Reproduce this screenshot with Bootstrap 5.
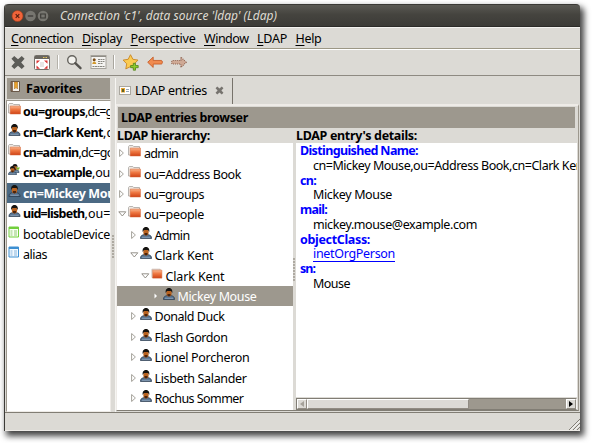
<!DOCTYPE html>
<html lang="en">
<head>
<meta charset="utf-8">
<meta name="viewport" content="width=device-width, initial-scale=1">
<title>Connection 'c1', data source 'ldap' (Ldap)</title>
<link href="https://cdn.jsdelivr.net/npm/bootstrap@5.3.0/dist/css/bootstrap.min.css" rel="stylesheet">
<style>
body{width:592px;height:443px;overflow:hidden;background:#fff;color:#000;font:12.5px/15px "Noto Sans","Open Sans",sans-serif;padding:4px 0 0 4px}
svg{display:block;flex:none}
[data-w]{white-space:nowrap;display:inline-block}
.app-window{width:576px;height:427px;background:#dcdad5;border-left:1px solid #3c3b37;border-radius:4px 4px 0 0;box-shadow:3px 4px 6px 1px rgba(0,0,0,.75)}
.titlebar{height:23px;background:linear-gradient(#5a5953,#45443f 45%,#3c3b37);border-top:1px solid #3a3935;border-bottom:1px solid #2c2b28;border-radius:4px 4px 0 0;color:#dfdbd2;font-style:italic;font-size:12px;padding-left:5px}
.menubar{height:22px;border-top:1px solid #f4f3f0;border-bottom:1px solid #9c9785;padding-left:6px;gap:8.5px}
.menubar span{text-underline-offset:2px}
.toolbar-strip{height:27px;border-top:1px solid #fff;border-bottom:1px solid #8e8a82;padding-bottom:2px}
.work-area{height:336px;padding-top:2px}
.side{width:106px;padding-left:1px}
.side-head{height:21px;margin-left:1px;width:103px;background:#9d988e;padding-left:3px}
.side-head svg{margin-top:-3px}
.side-list{height:312px;margin-top:1px;background:#fff;border:1px solid #9d988e;border-right-color:#eeebe7;border-bottom-color:#eeebe7;overflow:hidden}
.fav{height:20.42px;white-space:nowrap;overflow:hidden;padding-left:1px}
.fav .label{margin-left:2px;padding-top:1px}
.fav svg,.node svg.pic{margin-top:-4px}
.fav.chosen{background:#4b6983;color:#fff}
.sash{width:5px;border-right:1px solid #f6f5f2;position:relative}
.grip{width:3px;height:23px;position:absolute;background:radial-gradient(circle at 1px 1px,#9d988e .6px,transparent 1px) 0 0/3px 3px}
.notebook{width:463px}
.tab-row{height:26px}
.tab-page-title{width:117px;border-right:1px solid #77736b;padding:0 0 2px 3px}
.panel-body{border-top:2px solid #eeebe7;border-left:1px solid #eeebe7;border-right:1px solid #9d988e;border-bottom:1px solid #817d74;height:307px}
.browser-head{height:21px;margin:1px 3px 0 1px;background:#9d988e;padding-left:3px}
.caption-row{height:15px;padding-top:1px;line-height:14px}
.caption-row>:first-child{width:179px}
.tree{width:176px;height:267px;background:#fff;overflow:hidden}
.node{height:20.42px}
.node .label{margin-left:3px;padding-top:1px}
.node.chosen{background:#9d988e;color:#fff}
.arrow{width:10px}
.lvl0{padding-left:1px}.lvl1{padding-left:12.5px}.lvl2{padding-left:23.5px}.lvl3{padding-left:35.5px}
.details{width:281px;height:254px;background:#fff;overflow:hidden;margin-left:3px;line-height:14.78px;padding:1px 0 0 4px}
.details dl{margin:0}.details dt{color:#00f;height:14.78px}.details dd{margin:0 0 0 13px;height:14.78px}
.details a,.details a:hover{color:#00f;text-decoration:underline #00f 1px;text-underline-offset:3px}
.hscroll{width:281px;height:12px;margin:1px 0 0 3px;background:#9d988e;border:1px solid #817d74;border-right-color:#f6f5f2}
.hscroll>div{background:#dcdad5;border:1px solid #fff;border-right-color:#918c83;border-bottom-color:#918c83}
.hbutton{width:10px}.hthumb{width:162px}
.statusbar{height:19px;border-top:1px solid #817d74;border-bottom:1px solid #eeebe7}
</style>
</head>
<body>
<svg width="0" height="0" class="position-absolute">
<defs>
<linearGradient id="gf" x1="0" y1="0" x2="0" y2="1"><stop offset="0" stop-color="#f9b791"/><stop offset=".45" stop-color="#ee7741"/><stop offset="1" stop-color="#cf4316"/></linearGradient>
<symbol id="folder" viewBox="0 0 13 12"><path d="M.5 10V1.500l.8-1h3.500l.9 1h5.800v8.500z" fill="#eeeae5" stroke="#a9a5a0" stroke-width=".8"/><path d="M2.200 3h10.300v8H2.200z" fill="url(#gf)" stroke="#d46a3e" stroke-width=".5"/></symbol>
<symbol id="leaf" viewBox="0 0 13 12"><path d="M1 .8h9v9H1z" fill="#eeeae5" stroke="#b9a79c" stroke-width=".7"/><path d="M1.800 1.800h10v8.700h-10z" fill="url(#gf)" stroke="#d46a3e" stroke-width=".5"/></symbol>
<symbol id="person" viewBox="0 0 12 12"><path d="M.4 11.500C.4 8.800 2 8 4 7.600h4c2 .4 3.600 1.200 3.600 3.900z" fill="#597490" stroke="#26384c" stroke-width=".7"/><path d="M2 10.300h8" stroke="#91a6bc" stroke-width=".8"/><ellipse cx="6" cy="4.900" rx="2.700" ry="3.500" fill="#b8621f"/><path d="M2.700 5C2.200 1.500 4 .1 6 .1s3.800 1.400 3.300 4.900L8 3H4z" fill="#151310"/><path d="M4.500 6h3v1.700L6 8.600 4.500 7.700z" fill="#4b250e"/></symbol>
<symbol id="open" viewBox="0 0 10 8"><path d="M.8 1.800h7L4.300 6z" fill="#fff" stroke="#8b877f" stroke-width=".9"/></symbol>
<symbol id="shut" viewBox="0 0 10 8"><path d="M1.600.5v7L5.400 4z" fill="#fff" stroke="#9b978f" stroke-width=".9"/></symbol>
<symbol id="cross" viewBox="0 0 16 16"><path d="M1 4l3-3 4 3.600L12 1l3 3-3.600 4L15 12l-3 3-4-3.600L4 15l-3-3 3.600-4z"/></symbol>
<symbol id="arrowleft" viewBox="0 0 16 12"><path d="M.7 6L6.200.8v3.400h8.200c1.300 0 1.300 3.600 0 3.600H6.200v3.400z"/></symbol>
<symbol id="idcard" viewBox="0 0 12 9"><rect x=".5" y=".5" width="11" height="8" fill="#fff" stroke="#aaa79f"/><rect x="2" y="2" width="4" height="4.500" fill="#e8a533"/><path d="M3 3h2v3H3z" fill="#5f6428"/><path d="M7 3.500h3M7 5.500h3" stroke="#9ab" stroke-width="1"/></symbol>
</defs>
</svg>

<main class="app-window d-flex flex-column">
<header class="titlebar d-flex align-items-center flex-shrink-0">
<svg width="42" height="14" viewBox="0 0 42 14"><circle cx="7.500" cy="7" r="5.500" fill="#f0643a" stroke="#a23c18" stroke-width=".6"/><path d="M5.700 5.200l3.600 3.600m0-3.600L5.700 8.800" stroke="#592010" stroke-width="1.200"/><circle cx="20.500" cy="7" r="5.300" fill="#777670"/><path d="M17.800 7h5.400" stroke="#3b3a36" stroke-width="1.300"/><circle cx="33" cy="7" r="5.300" fill="#777670"/><path d="M30.700 5h4.600v4h-4.600z" fill="none" stroke="#3b3a36" stroke-width="1.100"/></svg>
<span data-w="217" class="ms-2">Connection 'c1', data source 'ldap' (Ldap)</span>
</header>
<nav class="menubar d-flex align-items-center flex-shrink-0">
<span data-w="62.500"><u>C</u>onnection</span><span data-w="40"><u>D</u>isplay</span><span data-w="65"><u>P</u>erspective</span><span data-w="44.500"><u>W</u>indow</span><span data-w="30"><u>L</u>DAP</span><span data-w="26"><u>H</u>elp</span>
</nav>
<div class="toolbar-strip d-flex align-items-center flex-shrink-0">
<svg class="ms-1" width="185" height="22" viewBox="9 51 185 22">
<use href="#cross" x="10" y="55" width="16" height="15" fill="#5c5c58"/>
<rect x="34.500" y="55.500" width="15" height="14" rx="1" fill="#fff" stroke="#74706a"/><path d="M35 56h14v3H35z" fill="#69655f"/><path d="M43 57.500h1.500m1 0H47" stroke="#e8c75c"/><path d="M36.500 60.500H40l-3.500 3.300zM47.500 60.500H44l3.500 3.300zM36.500 68.800H40l-3.500-3.300zM47.500 68.800H44l3.500-3.300z" fill="#dc3434"/><path d="M40 62h4v5h-4z" fill="#e8e5e5"/>
<path d="M57.500 55v14" stroke="#b5b2aa"/><path d="M58.500 55v14" stroke="#fff"/>
<circle cx="72" cy="60" r="4.300" fill="#f3f2ee" stroke="#65635e" stroke-width="1.400"/><path d="M75.300 63.200l5.200 5" stroke="#55534f" stroke-width="2.400" stroke-linecap="round"/>
<rect x="91" y="55.500" width="15" height="13" fill="#f5f4f1" stroke="#a6a39c"/><path d="M91 56.500h15" stroke="#8f8c85"/><circle cx="94.200" cy="59.700" r="1.500" fill="#7b4b17"/><path d="M92.300 64c0-3.500 3.900-3.500 3.900 0z" fill="#d39a2d"/><path d="M98 59.500h6.500M98 61.500h6.500M98 63.500h5M92.500 66.500h12" stroke="#888780" stroke-dasharray="2 .5"/>
<path d="M113.500 55v14" stroke="#a9a69e"/><path d="M114.500 55v14" stroke="#fff"/>
<path d="M130.500 54.700l2.400 4.600 5.100.8-3.700 3.700.8 5.100-4.600-2.300-4.700 2.300.9-5.100-3.600-3.700 5.100-.8z" fill="#fbcb51" stroke="#c98723" stroke-width=".9"/><path d="M133.300 63.300h2.200v2.200h2.700v2.200h-2.700v2.500h-2.200v-2.500h-2.700v-2.200h2.700z" fill="#8dcb2c" stroke="#4f831a" stroke-width=".8"/>
<use href="#arrowleft" x="147" y="56" width="16" height="12.500" fill="#f08b50" stroke="#c45520" stroke-width=".8"/>
<g transform="translate(187 56) scale(-1 1)"><use href="#arrowleft" width="16" height="12.500" fill="#cfa995" stroke="#8d6250" stroke-width="1.100" stroke-dasharray="1 1"/></g>
</svg>
</div>

<div class="work-area d-flex flex-shrink-0">
<aside class="side flex-shrink-0">
<div class="side-head d-flex align-items-center"><svg width="12" height="14" viewBox="0 0 12 14"><path d="M1 1.500h8.500v10H1z" fill="#f4f1eb" stroke="#6a5848"/><path d="M2 2v9" stroke="#6b4a32" stroke-width="1.500"/><path d="M4.500 2h3v7L6 7.500 4.500 9z" fill="#e8a12c" stroke="#a96814" stroke-width=".5"/></svg><b class="ms-1"><span data-w="56">Favorites</span></b></div>
<div class="side-list">
<div class="fav d-flex align-items-center"><svg width="13" height="12"><use href="#folder"/></svg><span class="label"><b data-w="62">ou=groups</b><span data-w="40">,dc=gda</span></span></div>
<div class="fav d-flex align-items-center"><svg width="13" height="12"><use href="#person"/></svg><span class="label"><b data-w="80">cn=Clark Kent</b><span data-w="33">,dc=g</span></span></div>
<div class="fav d-flex align-items-center"><svg width="13" height="12"><use href="#folder"/></svg><span class="label"><b data-w="55.500">cn=admin</b><span data-w="42">,dc=gou</span></span></div>
<div class="fav d-flex align-items-center"><svg width="13" height="12" viewBox="0 0 13 12"><use href="#person" x="2.500" y="0" width="9" height="9"/><use href="#person" x="0" y="2" width="9" height="9"/><path d="M8 3.500h4l-2 3z" fill="#78b82e"/></svg><span class="label"><b data-w="69">cn=example</b><span data-w="18">,ou</span></span></div>
<div class="fav chosen d-flex align-items-center"><svg width="13" height="12"><use href="#person"/></svg><span class="label"><b data-w="105">cn=Mickey Mouse</b></span></div>
<div class="fav d-flex align-items-center"><svg width="13" height="12"><use href="#person"/></svg><span class="label"><b data-w="61.500">uid=lisbeth</b><span data-w="26">,ou=</span></span></div>
<div class="fav d-flex align-items-center"><svg width="13" height="12" viewBox="0 0 13 12"><path d="M1 1h9.500v10H1z" fill="#f7fff2" stroke="#72cf3c"/><path d="M1 2h9.500" stroke="#72cf3c" stroke-width="2"/><path d="M2.500 5h2m1.500 0h3m-6.500 2h2M6 7h3M2.500 9h2M6 9h3" stroke="#94c97b"/></svg><span class="label" data-w="87">bootableDevice</span></div>
<div class="fav d-flex align-items-center"><svg width="13" height="12" viewBox="0 0 13 12"><path d="M1 1h9.500v10H1z" fill="#f2f9ff" stroke="#3c8fd2"/><path d="M1 2h9.500" stroke="#3c8fd2" stroke-width="2"/><path d="M2.500 5h2m1.500 0h3m-6.500 2h2M6 7h3M2.500 9h2M6 9h3" stroke="#8ab6dc"/></svg><span class="label" data-w="24">alias</span></div>
</div>
</aside>
<div class="sash flex-shrink-0"><div class="grip" style="top:157px;left:1px"></div></div>

<section class="notebook flex-shrink-0">
<div class="tab-row d-flex"><div class="tab-page-title d-flex align-items-center"><svg width="12" height="9" class="me-1"><use href="#idcard"/></svg><span data-w="72">LDAP entries</span><svg class="ms-2" width="9" height="9" fill="#77746f"><use href="#cross"/></svg></div></div>
<div class="panel-body">
<div class="browser-head d-flex align-items-center"><b data-w="127">LDAP entries browser</b></div>
<div class="caption-row d-flex"><b><span data-w="93">LDAP hierarchy:</span></b><b data-w="121">LDAP entry's details:</b></div>
<div class="d-flex">
<div class="tree flex-shrink-0">
<div class="node lvl0 d-flex align-items-center"><svg class="arrow" height="8"><use href="#shut"/></svg><svg class="pic" width="13" height="12"><use href="#folder"/></svg><span class="label" data-w="34">admin</span></div>
<div class="node lvl0 d-flex align-items-center"><svg class="arrow" height="8"><use href="#shut"/></svg><svg class="pic" width="13" height="12"><use href="#folder"/></svg><span class="label" data-w="97">ou=Address Book</span></div>
<div class="node lvl0 d-flex align-items-center"><svg class="arrow" height="8"><use href="#shut"/></svg><svg class="pic" width="13" height="12"><use href="#folder"/></svg><span class="label" data-w="60">ou=groups</span></div>
<div class="node lvl0 d-flex align-items-center"><svg class="arrow" height="8"><use href="#open"/></svg><svg class="pic" width="13" height="12"><use href="#folder"/></svg><span class="label" data-w="60">ou=people</span></div>
<div class="node lvl1 d-flex align-items-center"><svg class="arrow" height="8"><use href="#shut"/></svg><svg class="pic" width="12" height="12"><use href="#person"/></svg><span class="label" data-w="35">Admin</span></div>
<div class="node lvl1 d-flex align-items-center"><svg class="arrow" height="8"><use href="#open"/></svg><svg class="pic" width="12" height="12"><use href="#person"/></svg><span class="label" data-w="59">Clark Kent</span></div>
<div class="node lvl2 d-flex align-items-center"><svg class="arrow" height="8"><use href="#open"/></svg><svg class="pic" width="12" height="12"><use href="#leaf"/></svg><span class="label" data-w="59">Clark Kent</span></div>
<div class="node lvl3 chosen d-flex align-items-center"><svg class="arrow" height="8" viewBox="0 0 10 8"><path d="M1.500 1.500v5L4 4z" fill="#fff"/></svg><svg class="pic" width="12" height="12"><use href="#person"/></svg><span class="label" data-w="79">Mickey Mouse</span></div>
<div class="node lvl1 d-flex align-items-center"><svg class="arrow" height="8"><use href="#shut"/></svg><svg class="pic" width="12" height="12"><use href="#person"/></svg><span class="label" data-w="70">Donald Duck</span></div>
<div class="node lvl1 d-flex align-items-center"><svg class="arrow" height="8"><use href="#shut"/></svg><svg class="pic" width="12" height="12"><use href="#person"/></svg><span class="label" data-w="73">Flash Gordon</span></div>
<div class="node lvl1 d-flex align-items-center"><svg class="arrow" height="8"><use href="#shut"/></svg><svg class="pic" width="12" height="12"><use href="#person"/></svg><span class="label" data-w="95">Lionel Porcheron</span></div>
<div class="node lvl1 d-flex align-items-center"><svg class="arrow" height="8"><use href="#shut"/></svg><svg class="pic" width="12" height="12"><use href="#person"/></svg><span class="label" data-w="92">Lisbeth Salander</span></div>
<div class="node lvl1 d-flex align-items-center"><svg class="arrow" height="8"><use href="#shut"/></svg><svg class="pic" width="12" height="12"><use href="#person"/></svg><span class="label" data-w="89">Rochus Sommer</span></div>
</div>
<div class="position-relative">
<div class="grip" style="left:0;top:115px"></div>
<div class="details"><dl>
<dt><span data-w="118">Distinguished Name:</span></dt><dd><span data-w="270">cn=Mickey Mouse,ou=Address Book,cn=Clark Ken</span></dd>
<dt><span data-w="16">cn:</span></dt><dd><span data-w="79">Mickey Mouse</span></dd>
<dt><span data-w="27">mail:</span></dt><dd><span data-w="164">mickey.mouse@example.com</span></dd>
<dt><span data-w="70">objectClass:</span></dt><dd><a href="#" data-w="82">inetOrgPerson</a></dd>
<dt><span data-w="15">sn:</span></dt><dd><span data-w="37">Mouse</span></dd>
</dl></div>
<div class="hscroll d-flex"><div class="hbutton d-flex align-items-center justify-content-center"><svg width="4" height="6"><path d="M4 0v6L0 3z" fill="#a5a199"/></svg></div><div class="hthumb"></div><div class="hbutton ms-auto d-flex align-items-center justify-content-center"><svg width="4" height="6"><path d="M0 0v6l4-3z"/></svg></div></div>
</div>
</div>
</div>
</section>
</div>
<footer class="statusbar mt-auto d-flex justify-content-end align-items-end flex-shrink-0"><svg width="11" height="11" viewBox="0 0 11 11"><path d="M0 11L11 0M4 11l7-7M8 11l3-3" stroke="#817d74"/><path d="M1.500 11L11 1.500M5.500 11L11 5.500" stroke="#fff"/></svg></footer>
</main>
<script src="https://cdn.jsdelivr.net/npm/bootstrap@5.3.0/dist/js/bootstrap.bundle.min.js"></script>
<script>
// Track each label so that it spans the number of pixels in its data-w.
document.querySelectorAll('[data-w]').forEach(function (el) {
  var range = document.createRange();
  range.selectNodeContents(el);
  var natural = range.getBoundingClientRect().width;
  el.style.letterSpacing = ((+el.dataset.w - natural) / el.textContent.length) + 'px';
});
</script>
</body>
</html>
